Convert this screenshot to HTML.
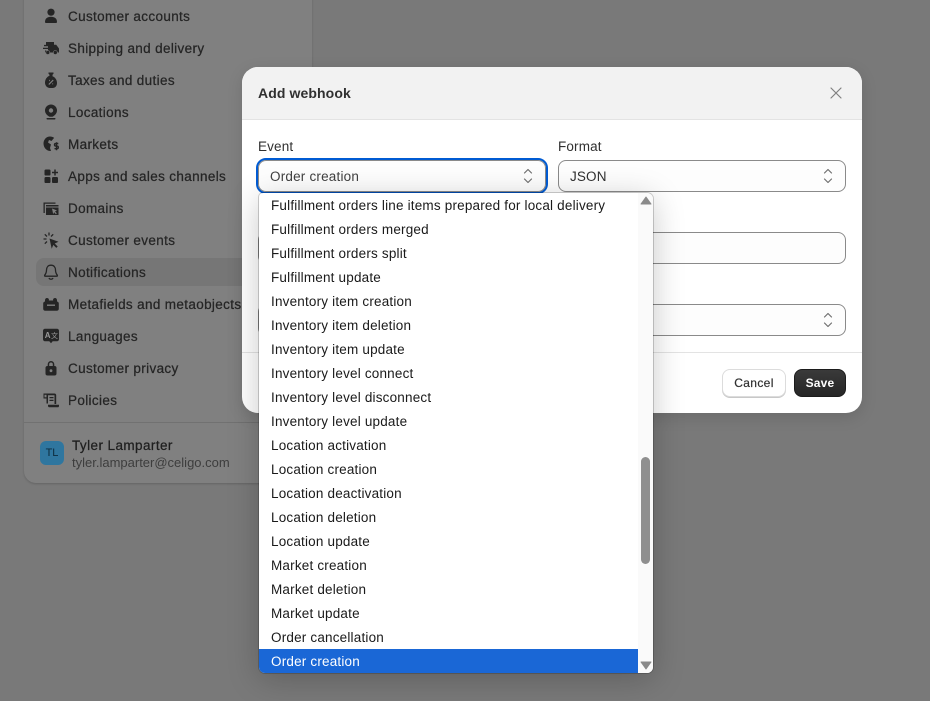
<!DOCTYPE html>
<html><head><meta charset="utf-8">
<style>
html,body{margin:0;padding:0;width:930px;height:701px;overflow:hidden;background:#797979;font-family:"Liberation Sans",sans-serif}
div,span,svg{position:absolute;box-sizing:border-box}
.t{white-space:nowrap;line-height:16px}
.n{left:68px;font-size:13.5px;font-weight:400;color:#252525;letter-spacing:.35px;-webkit-text-stroke:.25px #252525}
.o{left:271px;font-size:13.5px;color:#1a1a1a;letter-spacing:.19px}
.i{left:42px;width:18px;height:18px;fill:#252525}
.inp{background:#fdfdfd;border:1px solid #8a8a8a;border-radius:8px}
.l{font-size:13.5px;color:#303030;letter-spacing:.15px}
</style></head><body>
<div style="left:24px;top:-20px;width:288px;height:503px;background:#808080;border-radius:0 0 12px 12px;box-shadow:0 1px 2px rgba(0,0,0,.18)"></div>
<div style="left:36px;top:258px;width:230px;height:28px;background:#767676;border-radius:8px"></div>

<svg class="i" style="top:7px" viewBox="0 0 18 18"><circle cx="9" cy="5.2" r="3.6"/><path d="M3 15c0-3.500 2.500-5.200 6-5.200s6 1.700 6 5.200c0 .6-.4 1-1 1H4c-.6 0-1-.4-1-1z"/></svg>
<svg class="i" style="top:39px" viewBox="0 0 18 18"><path d="M4 3h8v2.800h2.200L17 9.500V13.500H3v-2h3V10H1V8.700h5V7.200H2V5.900h2z"/><circle cx="5.800" cy="13.500" r="2" stroke="#808080" stroke-width=".6"/><circle cx="13.300" cy="13.500" r="2" stroke="#808080" stroke-width=".6"/></svg>
<svg class="i" style="top:71px" viewBox="0 0 18 18"><path d="M6.500 1.500h5v1.300l-1 1v1.400c3 1.200 4.500 4 4.500 6.800 0 3-1.800 5-4.500 5h-3C4.800 16.500 3 14.500 3 11.500c0-2.800 1.500-5.600 4.500-6.800V3.800l-1-1z"/><path d="M6.800 13.500l4.400-4.400M7 9.500h.8M10.300 12.800h.8" stroke="#808080" stroke-width="1.200" fill="none"/></svg>
<svg class="i" style="top:103px" viewBox="0 0 18 18"><path fill-rule="evenodd" d="M9 1.500a6 6 0 0 1 6 6c0 2.800-2.200 5-4.500 6.300H7.500C5.200 12.500 3 10.300 3 7.500a6 6 0 0 1 6-6zM9 5.300a2.200 2.200 0 1 0 0 4.400 2.200 2.200 0 0 0 0-4.400z"/><rect x="4.500" y="15" width="9" height="1.500" rx=".7"/></svg>
<svg class="i" style="top:135px" viewBox="0 0 18 18"><path d="M8 1.500c1.600 0 3 .5 4.100 1.400L9.500 6 7 5 6 7.500l3 2-1 3.500 1 3C5 16.300 1.500 13 1.500 8.500 1.500 4.600 4.400 1.500 8 1.500z"/><path d="M16.300 8.500h-2.500a1.200 1.200 0 0 0 0 2.600h1.200a1.200 1.200 0 0 1 0 2.600h-2.500M14.500 7.200v8" stroke="#252525" stroke-width="1.400" fill="none"/></svg>
<svg class="i" style="top:167px" viewBox="0 0 18 18"><rect x="2.500" y="2.500" width="6" height="6" rx="1.300"/><rect x="2.500" y="10" width="6" height="6" rx="1.300"/><rect x="10" y="10" width="6" height="6" rx="1.300"/><path d="M13 2.500v6M10 5.500h6" stroke="#252525" stroke-width="1.500"/></svg>
<svg class="i" style="top:199px" viewBox="0 0 18 18"><path d="M1.500 3.500h12v1.300H2.800V14h-1.300z"/><path d="M4 6h12.500v10H4z"/><path d="M4 8h12.500" stroke="#808080"/><path d="M10 9.500l5 2-2 .9 1.800 2-.9.800-1.800-2-.9 2z" fill="#808080"/></svg>
<svg class="i" style="top:231px" viewBox="0 0 18 18"><path d="M7.500 7.500l9 3.300-3.800 1.700 3 3-1.400 1.400-3-3-1.600 3.800z"/><path d="M7 1.500v3M2.800 3.300l2.200 2.200M1.500 8h3M2.800 12.700L5 10.500M11.200 3.300L9 5.500" stroke="#252525" stroke-width="1.300" fill="none"/></svg>
<svg class="i" style="top:263px" viewBox="0 0 18 18"><path d="M9 2.200c-3 0-4.500 2.200-4.500 4.800 0 2.600-.7 3.800-1.800 5.200-.3.500 0 1 .5 1h11.600c.5 0 .8-.5.5-1-1.100-1.400-1.800-2.600-1.800-5.200 0-2.600-1.500-4.800-4.500-4.800z" fill="none" stroke="#252525" stroke-width="1.300"/><path d="M7 15a2.200 2.200 0 0 0 4 0" fill="none" stroke="#252525" stroke-width="1.300"/></svg>
<svg class="i" style="top:295px" viewBox="0 0 18 18"><path d="M3 5.200c0-1.300.8-2.200 2-2.200.9 0 1.600.5 1.900 1.300V5.500h4.200V4.300C11.400 3.500 12.100 3 13 3c1.200 0 2 .9 2 2.200V6.500c1.200.2 1.800 1 1.800 2v5.200c0 1.200-.9 2-2 2H3.200c-1.100 0-2-.8-2-2V8.500c0-1 .6-1.800 1.800-2z"/><rect x="5" y="9.500" width="8" height="1.400" fill="#808080"/></svg>
<svg class="i" style="top:327px" viewBox="0 0 18 18"><path d="M3 1.800h12c1.200 0 2 .9 2 2v8.500c0 1.100-.8 2-2 2h-4.300L9 16.300l-1.700-2H3c-1.200 0-2-.9-2-2V3.800c0-1.100.8-2 2-2z"/><text x="2.800" y="11" font-size="8" font-weight="700" fill="#9a9a9a" font-family="Liberation Sans">A</text><text x="9" y="11" font-size="7" fill="#9a9a9a" font-family="Noto Sans CJK SC">文</text></svg>
<svg class="i" style="top:359px" viewBox="0 0 18 18"><path d="M5.700 7V5.300a3.300 3.300 0 0 1 6.600 0V7h-1.500V5.300a1.800 1.800 0 0 0-3.600 0V7z"/><rect x="3.500" y="7" width="11" height="9.500" rx="2"/><circle cx="9" cy="11.700" r="1.400" fill="#808080"/></svg>
<svg class="i" style="top:391px" viewBox="0 0 18 18"><path d="M1.500 2.500h11c1 0 1.700.7 1.700 1.700V13h-1.700V4.200H6v8.300H4.500V7.500h-3z"/><path d="M7.500 6h4v1.300h-4zM7.500 8.700h4V10h-4z"/><path d="M6 13.800h11v1.200c0 .8-.6 1.300-1.300 1.300H7.500C6.700 16.300 6 15.700 6 15z"/><rect x="2.500" y="3.800" width="2" height="2.500" fill="#808080"/></svg>

<div class="t n" style="top:9px">Customer accounts</div>
<div class="t n" style="top:41px">Shipping and delivery</div>
<div class="t n" style="top:73px">Taxes and duties</div>
<div class="t n" style="top:105px">Locations</div>
<div class="t n" style="top:137px">Markets</div>
<div class="t n" style="top:169px">Apps and sales channels</div>
<div class="t n" style="top:201px">Domains</div>
<div class="t n" style="top:233px">Customer events</div>
<div class="t n" style="top:265px">Notifications</div>
<div class="t n" style="top:297px">Metafields and metaobjects</div>
<div class="t n" style="top:329px">Languages</div>
<div class="t n" style="top:361px">Customer privacy</div>
<div class="t n" style="top:393px">Policies</div>

<div style="left:24px;top:422px;width:288px;height:1px;background:#717171"></div>
<div style="left:40px;top:441px;width:24px;height:24px;border-radius:6px;background:#2f769f"></div>
<div class="t" style="left:40px;top:445px;width:24px;text-align:center;font-size:11px;color:#0d2b3d">TL</div>
<div class="t" style="left:72px;top:438px;font-size:13.5px;letter-spacing:.42px;color:#1f1f1f;-webkit-text-stroke:.25px #1f1f1f">Tyler Lamparter</div>
<div class="t" style="left:72px;top:455px;font-size:13px;letter-spacing:0;color:#3d3d3d">tyler.lamparter@celigo.com</div>

<!-- modal -->
<div style="left:242px;top:67px;width:620px;height:346px;background:#fff;border-radius:16px;overflow:hidden;box-shadow:0 4px 16px rgba(0,0,0,.12)">
  <div style="left:0;top:0;width:620px;height:53px;background:#f2f2f2;border-bottom:1px solid #e3e3e3"></div>
  <div style="left:0;top:285px;width:620px;height:1px;background:#e3e3e3"></div>
</div>
<div class="t" style="left:258px;top:85px;font-size:14px;font-weight:700;color:#303030;letter-spacing:.1px">Add webhook</div>
<svg style="left:828px;top:85px;width:16px;height:16px" viewBox="0 0 16 16"><path d="M3 3l10 10M13 3L3 13" stroke="#808080" stroke-width="1.200" stroke-linecap="round"/></svg>

<div class="t l" style="left:258px;top:139px">Event</div>
<div class="t l" style="left:558px;top:139px">Format</div>

<div style="left:256px;top:158px;width:292px;height:36px;border:2px solid #005bd3;border-radius:10px"></div>
<div class="inp" style="left:258px;top:160px;width:288px;height:32px"></div>
<div class="t l" style="left:270px;top:169px;color:#404040;letter-spacing:.2px">Order creation</div>
<svg style="left:520px;top:167px;width:16px;height:18px" viewBox="0 0 16 18"><path d="M4.500 6l3.500-3.500L11.500 6M4.500 12L8 15.500 11.500 12" fill="none" stroke="#707070" stroke-width="1.200" stroke-linecap="round" stroke-linejoin="round"/></svg>

<div class="inp" style="left:558px;top:160px;width:288px;height:32px"></div>
<div class="t l" style="left:570px;top:169px">JSON</div>
<svg style="left:820px;top:167px;width:16px;height:18px" viewBox="0 0 16 18"><path d="M4.500 6l3.500-3.500L11.500 6M4.500 12L8 15.500 11.500 12" fill="none" stroke="#707070" stroke-width="1.200" stroke-linecap="round" stroke-linejoin="round"/></svg>

<div class="inp" style="left:258px;top:232px;width:588px;height:32px"></div>
<div class="inp" style="left:258px;top:304px;width:588px;height:32px"></div>
<svg style="left:820px;top:311px;width:16px;height:18px" viewBox="0 0 16 18"><path d="M4.500 6l3.500-3.500L11.500 6M4.500 12L8 15.500 11.500 12" fill="none" stroke="#707070" stroke-width="1.200" stroke-linecap="round" stroke-linejoin="round"/></svg>

<div style="left:722px;top:369px;width:64px;height:28px;border-radius:8px;background:#fff;border:1px solid #dcdcdc;box-shadow:0 1px 0 #c8c8c8"></div>
<div class="t" style="left:722px;top:375px;width:64px;text-align:center;font-size:12px;font-weight:400;color:#303030;letter-spacing:.35px;-webkit-text-stroke:.2px #303030">Cancel</div>
<div style="left:794px;top:369px;width:52px;height:28px;border-radius:8px;background:linear-gradient(#3a3a3a,#262626);border:1px solid #1c1c1c"></div>
<div class="t" style="left:794px;top:375px;width:52px;text-align:center;font-size:12px;font-weight:700;color:#fff;letter-spacing:.2px">Save</div>

<!-- dropdown -->
<div style="left:259px;top:193px;width:394px;height:480px;background:#fff;border-radius:4px 6px 6px 6px;overflow:hidden;box-shadow:0 0 0 1px rgba(0,0,0,.18),0 6px 32px rgba(0,0,0,.22)">
  <div style="left:379px;top:0;width:15px;height:480px;background:#fafafa"></div>
  <div style="left:0;top:456px;width:379px;height:24px;background:#1a67d6"></div>
  <div style="left:382px;top:264px;width:9px;height:107px;border-radius:5px;background:#8f8f8f"></div>
  <svg style="left:381px;top:3px;width:12px;height:10px" viewBox="0 0 12 10"><path d="M6 1l5 7H1z" fill="#8a8a8a" stroke="#8a8a8a" stroke-linejoin="round"/></svg>
  <svg style="left:381px;top:467px;width:12px;height:10px" viewBox="0 0 12 10"><path d="M1 2h10L6 9z" fill="#8a8a8a" stroke="#8a8a8a" stroke-linejoin="round"/></svg>
</div>
<div class="t o" style="top:198px">Fulfillment orders line items prepared for local delivery</div>
<div class="t o" style="top:222px">Fulfillment orders merged</div>
<div class="t o" style="top:246px">Fulfillment orders split</div>
<div class="t o" style="top:270px">Fulfillment update</div>
<div class="t o" style="top:294px">Inventory item creation</div>
<div class="t o" style="top:318px">Inventory item deletion</div>
<div class="t o" style="top:342px">Inventory item update</div>
<div class="t o" style="top:366px">Inventory level connect</div>
<div class="t o" style="top:390px">Inventory level disconnect</div>
<div class="t o" style="top:414px">Inventory level update</div>
<div class="t o" style="top:438px">Location activation</div>
<div class="t o" style="top:462px">Location creation</div>
<div class="t o" style="top:486px">Location deactivation</div>
<div class="t o" style="top:510px">Location deletion</div>
<div class="t o" style="top:534px">Location update</div>
<div class="t o" style="top:558px">Market creation</div>
<div class="t o" style="top:582px">Market deletion</div>
<div class="t o" style="top:606px">Market update</div>
<div class="t o" style="top:630px">Order cancellation</div>
<div class="t o" style="top:654px;color:#fff">Order creation</div>
</body></html>
